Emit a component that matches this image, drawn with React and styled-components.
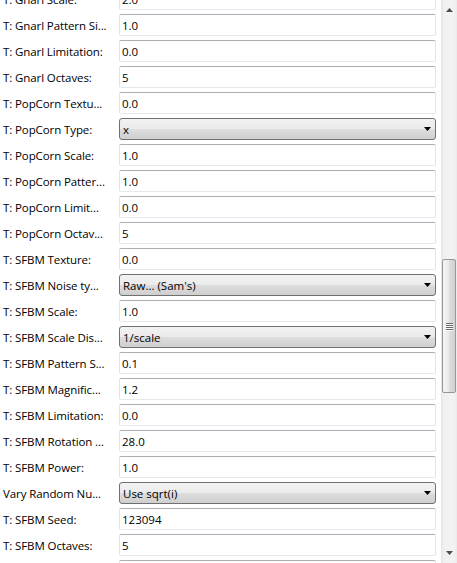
import React from 'react';
import styled, { createGlobalStyle } from 'styled-components';

const GlobalStyle = createGlobalStyle`
  html, body {
    margin: 0;
    padding: 0;
    background: #fff;
  }
  body {
    font-family: "Open Sans", "Noto Sans", sans-serif;
    font-size: 12px;
    color: #000;
  }
`;

const Window = styled.div`
  display: flex;
  width: 457px;
  height: 563px;
  overflow: hidden;
  background: #fff;
`;

const Panel = styled.div`
  flex: 1;
  overflow: hidden;
`;

const List = styled.div`
  display: flex;
  flex-direction: column;
  gap: 4px;
  margin-top: -12px;
  padding-right: 5px;
`;

const Row = styled.div`
  display: grid;
  grid-template-columns: 119px 1fr;
  align-items: center;
  height: 22px;
`;

const Label = styled.div`
  padding-left: 3px;
  font-size: 11.5px;
  white-space: nowrap;
  overflow: hidden;
  letter-spacing: -0.1px;
`;

const TextField = styled.div`
  box-sizing: border-box;
  height: 22px;
  display: flex;
  align-items: center;
  padding-left: 2px;
  font-size: 11.5px;
  border: 1px solid #e2e3ea;
  border-top-color: #abadb3;
  border-bottom-color: #e3e9ef;
  border-radius: 2px;
  background: #fff;
`;

const Combo = styled.div`
  box-sizing: border-box;
  height: 22px;
  display: flex;
  align-items: center;
  justify-content: space-between;
  padding: 0 4px 0 3px;
  font-size: 11.5px;
  border: 1px solid #707070;
  border-radius: 3px;
  background: linear-gradient(#f2f2f2 0%, #ebebeb 50%, #dddddd 51%, #cfcfcf 100%);
`;

const ComboArrow = () => (
  <svg width="7" height="4" viewBox="0 0 7 4">
    <path d="M0 0h7L3.5 4z" fill="#000" />
  </svg>
);

const ScrollBar = styled.div`
  width: 16px;
  display: flex;
  flex-direction: column;
  background: linear-gradient(90deg, #e3e3e3 0%, #f0f0f0 15%, #f3f3f3 80%, #eaeaea 100%);
`;

const ArrowButton = styled.div`
  height: 17px;
  display: flex;
  align-items: ${p => (p.$down ? 'flex-start' : 'flex-end')};
  justify-content: center;
  padding: ${p => (p.$down ? '5px 0 0' : '0 0 5px')};
  box-sizing: border-box;
`;

const Track = styled.div`
  flex: 1;
  display: flex;
  flex-direction: column;
`;

const Thumb = styled.div`
  box-sizing: border-box;
  margin-left: 1px;
  width: 14px;
  height: 134px;
  border: 1px solid #979797;
  border-radius: 2px;
  background: linear-gradient(90deg, #f4f4f4 0%, #ebebeb 45%, #dcdcdc 55%, #d1d1d1 100%);
  display: flex;
  flex-direction: column;
  align-items: center;
  justify-content: center;
  gap: 1px;
`;

const GripLine = styled.div`
  width: 7px;
  height: 1px;
  background: #6a6a6a;
  box-shadow: 0 1px 0 #fafafa;
`;

const Triangle = ({ down }) => (
  <svg width="7" height="4" viewBox="0 0 7 4">
    <path d={down ? 'M0 0h7L3.5 4z' : 'M3.5 0L7 4H0z'} fill="#4d4d4d" />
  </svg>
);

const rows = [
  ['T: Gnarl Scale:', '2.0'],
  ['T: Gnarl Pattern Si...', '1.0'],
  ['T: Gnarl Limitation:', '0.0'],
  ['T: Gnarl Octaves:', '5'],
  ['T: PopCorn Textu...', '0.0'],
  ['T: PopCorn Type:', 'x', true],
  ['T: PopCorn Scale:', '1.0'],
  ['T: PopCorn Patter...', '1.0'],
  ['T: PopCorn Limit...', '0.0'],
  ['T: PopCorn Octav...', '5'],
  ['T: SFBM Texture:', '0.0'],
  ['T: SFBM Noise ty...', "Raw... (Sam's)", true],
  ['T: SFBM Scale:', '1.0'],
  ['T: SFBM Scale Dis...', '1/scale', true],
  ['T: SFBM Pattern S...', '0.1'],
  ['T: SFBM Magnific...', '1.2'],
  ['T: SFBM Limitation:', '0.0'],
  ['T: SFBM Rotation ...', '28.0'],
  ['T: SFBM Power:', '1.0'],
  ['Vary Random Nu...', 'Use sqrt(i)', true],
  ['T: SFBM Seed:', '123094'],
  ['T: SFBM Octaves:', '5'],
  ['T: SFBM Distortion:', '0.0'],
];

export default function App() {
  return (
    <>
      <GlobalStyle />
      <Window>
        <Panel>
          <List>
            {rows.map(([label, value, combo]) => (
              <Row key={label}>
                <Label>{label}</Label>
                {combo ? (
                  <Combo>
                    <span>{value}</span>
                    <ComboArrow />
                  </Combo>
                ) : (
                  <TextField>{value}</TextField>
                )}
              </Row>
            ))}
          </List>
        </Panel>
        <ScrollBar>
          <ArrowButton>
            <Triangle />
          </ArrowButton>
          <Track>
            <div style={{ height: 242 }} />
            <Thumb>
              <GripLine />
              <GripLine />
              <GripLine />
              <GripLine />
            </Thumb>
          </Track>
          <ArrowButton $down>
            <Triangle down />
          </ArrowButton>
        </ScrollBar>
      </Window>
    </>
  );
}
